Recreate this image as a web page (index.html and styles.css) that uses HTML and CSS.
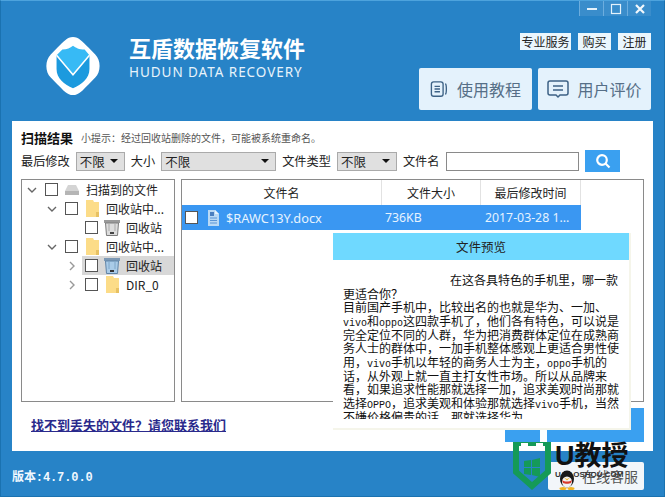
FILE: index.html
```html
<!DOCTYPE html>
<html lang="zh">
<head>
<meta charset="utf-8">
<title>互盾数据恢复软件</title>
<link rel="stylesheet" href="styles.css">
</head>
<body>
<div class="window">
  <div class="winbtns">
    <div class="winbtn"><svg width="12" height="12" viewBox="0 0 12 12"><rect x="1" y="5" width="10" height="2" fill="#e4f2fb"/></svg></div>
    <div class="winbtn"><svg width="12" height="12" viewBox="0 0 12 12"><rect x="1.500" y="1.500" width="9" height="9" fill="none" stroke="#e4f2fb" stroke-width="1.200"/></svg></div>
    <div class="winbtn"><svg width="12" height="12" viewBox="0 0 12 12"><path d="M2 2l8 8M10 2l-8 8" stroke="#f2f8fc" stroke-width="2.200"/></svg></div>
  </div>
  <header class="header">
    <svg class="logo" width="60" height="60" viewBox="0 0 62 62">
      <path d="M31 1C37 1 41 6 47 12L54 19C60 25 60 37 54 43L47 50C41 56 37 61 31 61C25 61 21 56 15 50L8 43C2 37 2 25 8 19L15 12C21 6 25 1 31 1Z" fill="#fff"/>
      <path d="M14 20L31 40L48 20V34C48 44 40 50 31 54C22 50 14 44 14 34Z" fill="#1c9ade"/>
      <path d="M20 14C25 14 28 12 31 10C34 12 37 14 43 14L48 20L31 40L14 20Z" fill="#37baf5"/>
      <path d="M14 20L31 40L48 20" fill="none" stroke="#fff" stroke-width="1.600"/>
    </svg>
    <div class="brand">
      <div class="brand-cn">互盾数据恢复软件</div>
      <div class="brand-en">HUDUN DATA RECOVERY</div>
    </div>
    <div class="header-right">
      <div class="toplinks">
        <span class="toplink wide">专业服务</span>
        <span class="toplink">购买</span>
        <span class="toplink">注册</span>
      </div>
      <div class="bigbtns">
        <div class="bigbtn">
          <svg width="19" height="18" viewBox="0 0 20 20" fill="none" stroke="#3d6285" stroke-width="1.500"><rect x="1" y="2" width="13" height="16" rx="2.500"/><path d="M4.500 7h6M4.500 10h6M4.500 13h6M16.500 4c1.500 1 1.500 11 0 12"/></svg>
          <span>使用教程</span>
        </div>
        <div class="bigbtn">
          <svg width="22" height="20" viewBox="0 0 22 20" fill="none" stroke="#3d6285" stroke-width="1.500"><path d="M3 2h16a2 2 0 0 1 2 2v10a2 2 0 0 1-2 2h-6l-2 2-2-2H3a2 2 0 0 1-2-2V4a2 2 0 0 1 2-2Z"/><path d="M6 7h10M6 11h10"/></svg>
          <span>用户评价</span>
        </div>
      </div>
    </div>
  </header>

  <main class="panel">
    <div class="scan-head">
      <span class="scan-title">扫描结果</span>
      <span class="scan-hint">小提示：经过回收站删除的文件，可能被系统重命名。</span>
    </div>
    <div class="filters">
      <span class="flabel">最后修改</span>
      <div class="select s1"><span>不限</span><i class="caret"></i></div>
      <span class="flabel">大小</span>
      <div class="select s2"><span>不限</span><i class="caret"></i></div>
      <span class="flabel">文件类型</span>
      <div class="select s3"><span>不限</span><i class="caret"></i></div>
      <span class="flabel">文件名</span>
      <div class="search-input"></div>
      <div class="search-btn"><svg width="16" height="16" viewBox="0 0 16 16" fill="none" stroke="#fff" stroke-width="2.200"><circle cx="7" cy="7" r="4.800"/><path d="M10.500 10.500L14.500 14.500"/></svg></div>
    </div>
    <div class="lists">
      <div class="tree">
        <div class="row">
          <svg class="chev" width="10" height="10" viewBox="0 0 10 10"><path d="M1 3l4 4 4-4" fill="none" stroke="#666" stroke-width="1.400"/></svg>
          <i class="check"></i>
          <svg class="ic" width="16" height="12" viewBox="0 0 16 12"><path d="M4 1h8l3 6v4H1V7Z" fill="#d4d4d4"/><rect x="1" y="7" width="14" height="4" fill="#b5b5b5"/></svg>
          <span class="label">扫描到的文件</span>
        </div>
        <div class="row l2">
          <svg class="chev" width="10" height="10" viewBox="0 0 10 10"><path d="M1 3l4 4 4-4" fill="none" stroke="#666" stroke-width="1.400"/></svg>
          <i class="check"></i>
          <svg class="ic folder" width="13" height="17" viewBox="0 0 13 17"><path d="M0 0h7l1 2h5v15H0Z" fill="#fcdc88"/><path d="M10 17v-5h3v5Z" fill="#e7c163"/></svg>
          <span class="label">回收站中...</span>
        </div>
        <div class="row l3">
          <i class="chev-space"></i>
          <i class="check"></i>
          <svg class="ic" width="16" height="17" viewBox="0 0 16 17"><path d="M0 1h16v3H0Z" fill="#9a9a9a"/><path d="M1.500 4h13l-1 12.500h-11Z" fill="#dcdcdc" stroke="#7c7c7c"/><path d="M5 5v7M11 5v7" stroke="#aaa"/><rect x="6" y="13" width="4" height="2" fill="#444"/></svg>
          <span class="label">回收站</span>
        </div>
        <div class="row l2">
          <svg class="chev" width="10" height="10" viewBox="0 0 10 10"><path d="M1 3l4 4 4-4" fill="none" stroke="#666" stroke-width="1.400"/></svg>
          <i class="check"></i>
          <svg class="ic folder" width="13" height="17" viewBox="0 0 13 17"><path d="M0 0h7l1 2h5v15H0Z" fill="#fcdc88"/><path d="M10 17v-5h3v5Z" fill="#e7c163"/></svg>
          <span class="label">回收站中...</span>
        </div>
        <div class="row l3 active">
          <svg class="chev" width="10" height="10" viewBox="0 0 10 10"><path d="M3 1l4 4-4 4" fill="none" stroke="#999" stroke-width="1.400"/></svg>
          <i class="check"></i>
          <svg class="ic" width="16" height="17" viewBox="0 0 16 17"><path d="M0 1h16v3H0Z" fill="#7d99b5"/><path d="M1.500 4h13l-1 12.500h-11Z" fill="#a9cbe8" stroke="#5f83a6"/><path d="M5 5v7M11 5v7" stroke="#7fa6c8"/><rect x="6" y="13" width="4" height="2" fill="#333"/></svg>
          <span class="label">回收站</span>
        </div>
        <div class="row l3">
          <svg class="chev" width="10" height="10" viewBox="0 0 10 10"><path d="M3 1l4 4-4 4" fill="none" stroke="#999" stroke-width="1.400"/></svg>
          <i class="check"></i>
          <svg class="ic folder" width="13" height="17" viewBox="0 0 13 17"><path d="M0 0h7l1 2h5v15H0Z" fill="#fcdc88"/><path d="M10 17v-5h3v5Z" fill="#e7c163"/></svg>
          <span class="label">DIR_0</span>
        </div>
      </div>
      <div class="files">
        <div class="thead">
          <div class="col c-name">文件名</div>
          <div class="col c-size">文件大小</div>
          <div class="col c-date">最后修改时间</div>
        </div>
        <div class="trow">
          <div class="cell c-name">
            <i class="check"></i>
            <svg class="docx" width="13" height="16" viewBox="0 0 13 16"><path d="M1 0h7l4 4v12H1Z" fill="#b9d9f5"/><path d="M8 0l4 4H8Z" fill="#e8f4ff"/><rect x="3" y="2" width="4" height="4" fill="#4a7fc0"/><path d="M3 8h7M3 10.500h7M3 13h7" stroke="#5a95d6"/></svg>
            <span>$RAWC13Y.docx</span>
          </div>
          <div class="cell c-size">736KB</div>
          <div class="cell c-date">2017-03-28 1...</div>
        </div>
      </div>
    </div>
    <div class="actions">
      <a class="help">找不到丢失的文件？请您联系我们</a>
      <div class="action-btns">
        <div class="action a-back"></div>
        <div class="action a-next"></div>
      </div>
    </div>

    <section class="preview">
      <div class="preview-head">文件预览</div>
      <div class="preview-body">
        <div class="preview-text">在这各具特色的手机里，哪一款<br>更适合你？<br>目前国产手机中，比较出名的也就是华为、一加、<br><span class="lat">vivo</span>和<span class="lat">oppo</span>这四款手机了，他们各有特色，可以说是<br>完全定位不同的人群，华为把消费群体定位在成熟商<br>务人士的群体中，一加手机整体感观上更适合男性使<br>用，<span class="lat">vivo</span>手机以年轻的商务人士为主，<span class="lat">oppo</span>手机的<br>话，从外观上就一直主打女性市场。所以从品牌来<br>看，如果追求性能那就选择一加，追求美观时尚那就<br>选择<span class="lat">OPPO</span>，追求美观和体验那就选择<span class="lat">vivo</span>手机，当然<br>不嫌价格偏贵的话，那就选择华为。</div>
      </div>
    </section>
  </main>

  <footer class="footer">
    <span class="version">版本:4.7.0.0</span>
    <div class="service">在线客服</div>
  </footer>

  <div class="watermark">
    <svg class="wm-shield" width="38" height="48" viewBox="0 0 38 48">
      <path d="M3 1h32v29L19 44 3 30Z" fill="none" stroke="#159a58" stroke-width="6"/>
      <path d="M8 1h7v3H8ZM23 1h7v3h-7Z" fill="#fff"/>
      <path d="M11 19l7-1v7h-7ZM19 18l8-2v9h-8ZM11 26h7v7l-7-1ZM19 26h8v9l-8-2Z" fill="#159a58"/>
    </svg>
    <div class="wm-text">U教授</div>
    <div class="wm-url">UJIAOSHOU.COM</div>
    <svg class="wm-qq" width="18" height="20" viewBox="0 0 18 20">
      <ellipse cx="9" cy="9" rx="7" ry="8.500" fill="#1a1a1a"/>
      <ellipse cx="9" cy="12" rx="5" ry="5.500" fill="#f2f2f2"/>
      <path d="M4 10c3 2 7 2 10 0l-1 3c-2 1-6 1-8 0Z" fill="#d8392b"/>
      <path d="M6 7.500l3 1.500 3-1.500-3 3Z" fill="#f0b323"/>
      <ellipse cx="5" cy="18.500" rx="3.500" ry="1.500" fill="#f0b323"/>
      <ellipse cx="13" cy="18.500" rx="3.500" ry="1.500" fill="#f0b323"/>
    </svg>
  </div>
</div>
</body>
</html>
```
FILE: styles.css
```css
* { box-sizing: border-box; }
html, body { margin: 0; padding: 0; }
body { width: 665px; height: 497px; overflow: hidden; font-family: "Noto Sans CJK SC", "Liberation Sans", sans-serif; color: #222; }
i { display: block; font-style: normal; }
svg { display: block; flex: none; }

.window { position: relative; width: 665px; height: 497px; background: #2783c7; border: 1px solid #1a72b0; border-top-color: #4da3dd; display: flex; flex-direction: column; overflow: hidden; }

.winbtns { position: absolute; top: 0; right: 13px; display: flex; height: 15px; }
.winbtn { width: 24px; height: 15px; display: flex; align-items: center; justify-content: center; background: #3a8dcb; border-left: 1px solid #6cadde; }

.header { height: 120px; display: flex; flex: none; }
.logo { margin: 35px 0 0 42px; }
.brand { margin: 30px 0 0 26px; }
.brand-cn { font-size: 22px; line-height: 32px; font-weight: 700; color: #fff; }
.brand-en { font-family: "Noto Sans", sans-serif; font-size: 13.500px; line-height: 18px; letter-spacing: .95px; color: #e8f3fb; white-space: nowrap; }

.header-right { margin-left: auto; padding: 32px 13px 0 0; display: flex; flex-direction: column; align-items: flex-end; }
.toplinks { display: flex; gap: 7px; }
.toplink { width: 33px; height: 17px; background: #eaf6fd; color: #222; font-size: 12px; line-height: 17px; text-align: center; white-space: nowrap; }
.toplink.wide { width: 51px; }
.bigbtns { display: flex; gap: 6px; margin-top: 18px; }
.bigbtn { width: 113px; height: 42px; background: #e4f2fc; border-radius: 2px; display: flex; align-items: center; justify-content: center; gap: 8px; color: #566f87; font-size: 16px; white-space: nowrap; }

.panel { position: relative; flex: none; height: 330px; width: 641px; margin-left: 11px; background: #fff; padding: 0 9px; }
.scan-head { height: 29px; padding-top: 5px; display: flex; align-items: center; gap: 8px; white-space: nowrap; }
.scan-title { font-size: 13px; font-weight: 700; color: #111; line-height: 20px; }
.scan-hint { font-size: 10px; color: #555; line-height: 20px; }

.filters { display: flex; align-items: center; height: 22px; }
.flabel { font-size: 12.200px; line-height: 19px; color: #222; white-space: nowrap; }
.select { height: 19px; background: #e0e0e0; border: 1px solid #aaa; display: flex; align-items: center; justify-content: space-between; padding: 0 6px 0 3px; font-size: 12.500px; line-height: 17px; color: #222; margin: 0 6px; }
.s1 { width: 49px; }
.s2 { width: 115px; }
.s3 { width: 60px; }
.caret { width: 0; height: 0; border: 4px solid transparent; border-top: 4px solid #111; border-bottom: 0; }
.search-input { width: 133px; height: 19px; border: 1px solid #8a8a8a; margin-left: 7px; background: #fff; }
.search-btn { width: 35px; height: 22px; margin-left: 6px; background: #3aa0f0; display: flex; align-items: center; justify-content: center; }

.lists { display: flex; gap: 6px; margin-top: 7px; height: 223px; }
.tree { width: 154px; border: 1px solid #8a8a8a; }
.row { height: 19px; display: flex; align-items: center; padding-left: 5px; white-space: nowrap; font-size: 12px; color: #222; }
.row.l2 { padding-left: 25px; }
.row.l3 { padding-left: 45px; }
.row.active { background: linear-gradient(90deg, transparent 60px, #d8d8d8 60px); }
.chev, .chev-space { width: 10px; height: 10px; margin-right: 8px; }
.check { width: 13px; height: 13px; border: 1px solid #555; background: #fff; flex: none; }
.ic { margin: 0 6px; }
.ic.folder { margin: 0 7px 0 8px; }

.files { width: 463px; border: 1px solid #8a8a8a; }
.thead { display: flex; height: 25px; }
.col { font-size: 12px; line-height: 25px; text-align: center; color: #222; border-right: 1px solid #e2e2e2; }
.c-name { width: 200px; }
.c-size { width: 99px; }
.c-date { width: 100px; }
.trow { display: flex; height: 25px; background: #3a97f2; color: #e6f3ff; width: 399px; }
.cell { display: flex; align-items: center; font-family: "Noto Sans", sans-serif; font-size: 12.300px; padding-left: 4px; white-space: nowrap; }
.cell.c-name { padding-left: 3px; font-size: 12.800px; }
.cell.c-size { padding-left: 3px; }
.docx { margin: 0 6px 0 9px; }

.actions { display: flex; justify-content: space-between; height: 40px; padding: 6px 0 0 10px; }
.help { font-size: 13px; font-weight: 700; color: #2a2a8c; text-decoration: underline; line-height: 34px; white-space: nowrap; }
.action-btns { display: flex; gap: 7px; }
.action { height: 34px; background: #3aa0f0; }
.a-back { width: 35px; }
.a-next { width: 97px; }

.preview { position: absolute; left: 321px; top: 112px; width: 298px; height: 197px; background: #fff; border-right: 2px solid #f5f5ea; border-bottom: 2px solid #f5f5ea; }
.preview-head { height: 27px; background: #6fd9ff; text-align: center; font-size: 12.500px; line-height: 27px; color: #222; }
.preview-body { padding: 13px 8px 0 10px; }
.preview-text { width: 280px; height: 146px; overflow: hidden; font-size: 12px; line-height: 13.650px; color: #111; white-space: nowrap; text-indent: 107px; }
.lat { font-family: "Liberation Mono", monospace; font-size: 10px; line-height: 0; }

.footer { flex: 1; display: flex; justify-content: space-between; padding: 11px 20px 0 11px; }
.version { font-family: "Liberation Mono", "Noto Sans CJK SC", monospace; font-size: 12px; font-weight: 700; line-height: 17px; margin-top: 8px; color: #f0f8ff; letter-spacing: -.1px; white-space: nowrap; }
.service { width: 96px; height: 28px; background: #f2f6fa; border-radius: 2px; color: #555; font-size: 14px; line-height: 28px; padding-left: 34px; white-space: nowrap; }

.watermark { position: absolute; left: 512px; top: 441px; width: 120px; height: 50px; }
.wm-shield { position: absolute; left: 0; top: 0; }
.wm-text { position: absolute; left: 42px; top: -2px; font-family: "Liberation Sans", "Noto Sans CJK SC", sans-serif; font-size: 27px; line-height: 32px; font-weight: 700; color: #111; white-space: nowrap; }
.wm-url { position: absolute; left: 42px; top: 28px; font-family: "Liberation Sans", sans-serif; font-size: 8px; line-height: 9px; font-weight: 700; color: #333; white-space: nowrap; }
.wm-qq { position: absolute; left: 45px; top: 28px; }
```
